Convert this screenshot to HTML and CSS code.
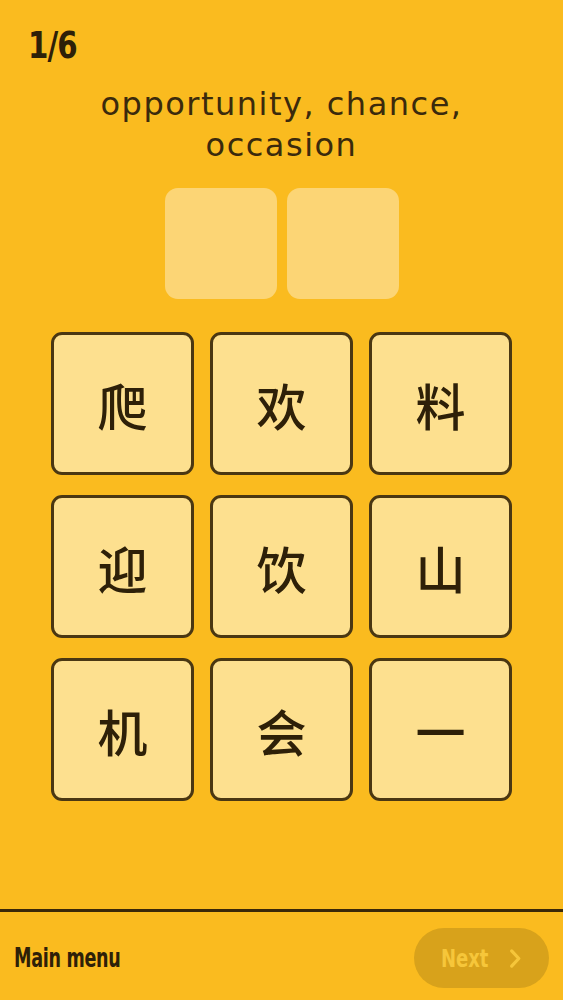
FILE: index.html
```html
<!DOCTYPE html>
<html lang="en">
<head>
<meta charset="utf-8">
<title>Quiz</title>
<link rel="stylesheet" href="styles.css">
</head>
<body>
<div class="app">
  <main class="main">
    <div class="counter"><span class="squeeze">1/6</span></div>
    <h1 class="prompt">opportunity, chance,<br>occasion</h1>
    <div class="slots">
      <div class="slot"></div>
      <div class="slot"></div>
    </div>
    <div class="grid">
      <button class="tile">爬</button>
      <button class="tile">欢</button>
      <button class="tile">料</button>
      <button class="tile">迎</button>
      <button class="tile">饮</button>
      <button class="tile">山</button>
      <button class="tile">机</button>
      <button class="tile">会</button>
      <button class="tile">一</button>
    </div>
  </main>
  <footer class="footer">
    <span class="menu">Main menu</span>
    <button class="next"><span class="next-label">Next</span><svg class="chev" viewBox="0 0 14 22" width="14" height="21"><path d="M3.5 3 L11 11 L3.5 19" fill="none" stroke="currentColor" stroke-width="3.4" stroke-linecap="round" stroke-linejoin="round"/></svg></button>
  </footer>
</div>
</body>
</html>
```

FILE: styles.css
```css
html, body {
  margin: 0;
  padding: 0;
  background: #fabb1f;
}
.app {
  width: 563px;
  height: 1000px;
  display: flex;
  flex-direction: column;
  color: #3b2a0c;
}
.main {
  height: 909px;
  box-sizing: border-box;
  padding-top: 26px;
  display: flex;
  flex-direction: column;
}
.counter {
  margin-left: 28px;
  font-family: "DejaVu Sans Condensed", "DejaVu Sans", sans-serif;
  font-stretch: condensed;
  font-weight: 700;
  font-size: 37px;
  line-height: 40px;
  letter-spacing: -1px;
  color: #2e2008;
}
.squeeze {
  display: inline-block;
  transform: scaleX(0.88);
  transform-origin: left center;
}
.prompt {
  margin: 18px 0 0;
  text-align: center;
  font-family: "DejaVu Sans", sans-serif;
  font-weight: 400;
  font-size: 32px;
  line-height: 41px;
  letter-spacing: 1.5px;
  color: #3b2a0c;
}
.slots {
  margin-top: 22px;
  display: flex;
  justify-content: center;
  gap: 10px;
}
.slot {
  width: 112px;
  height: 111px;
  border-radius: 13px;
  background: #fcd575;
}
.grid {
  margin: 33px auto 0;
  display: grid;
  grid-template-columns: repeat(3, 143px);
  grid-auto-rows: 143px;
  column-gap: 16px;
  row-gap: 20px;
}
.tile {
  margin: 0;
  padding: 0;
  box-sizing: border-box;
  border: 3px solid #4a3712;
  border-radius: 11px;
  background: #fde08f;
  color: #2e2008;
  font-family: "Noto Sans CJK SC", sans-serif;
  font-weight: 500;
  font-size: 50px;
  display: flex;
  align-items: center;
  justify-content: center;
}
.footer {
  flex: 1;
  border-top: 3px solid #3a2808;
  display: flex;
  align-items: center;
  justify-content: space-between;
  padding: 0 14px 0 14px;
}
.menu {
  display: inline-block;
  font-family: "DejaVu Sans Condensed", "DejaVu Sans", sans-serif;
  font-stretch: condensed;
  font-weight: 700;
  font-size: 26px;
  letter-spacing: -0.4px;
  color: #2e2008;
  margin-top: 4px;
  transform: scaleX(0.75);
  transform-origin: left center;
}
.next {
  margin: 4px 0 0;
  width: 135px;
  height: 60px;
  border: none;
  border-radius: 30px;
  background: #d8a21b;
  color: #f6c63a;
  font-family: "DejaVu Sans Condensed", "DejaVu Sans", sans-serif;
  font-stretch: condensed;
  font-weight: 700;
  font-size: 25px;
  display: flex;
  align-items: center;
  justify-content: flex-start;
  gap: 8px;
  padding: 0 0 0 27px;
}
.next-label {
  display: inline-block;
  transform: scaleX(0.8);
  transform-origin: left center;
}
.chev {
  display: block;
}
```
